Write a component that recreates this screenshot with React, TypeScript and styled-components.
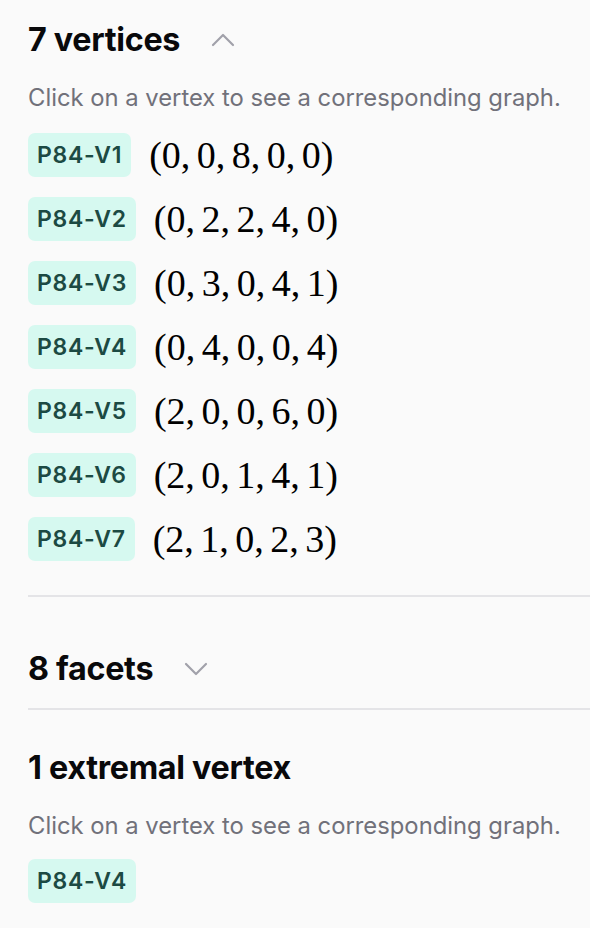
import styled, { createGlobalStyle } from "styled-components";

const GlobalStyle = createGlobalStyle`
  html, body {
    margin: 0;
    padding: 0;
    background: #fafafa;
  }
  body {
    font-family: Inter, "Noto Sans", "Liberation Sans", sans-serif;
    color: #09090b;
  }
`;

const Panel = styled.div`
  width: 590px;
  padding-left: 28px;
  box-sizing: border-box;
`;

const Section = styled.section<{ $top: number; $bottom: number; $last?: boolean }>`
  padding-top: ${(p) => p.$top}px;
  padding-bottom: ${(p) => p.$bottom}px;
  border-bottom: ${(p) => (p.$last ? "none" : "2px solid #e4e4e7")};
`;

const HeaderRow = styled.div`
  display: flex;
  align-items: center;
  height: 40px;
`;

const Title = styled.h2`
  margin: 0;
  font-size: 32.3px;
  font-weight: 700;
  line-height: 40px;
  letter-spacing: -0.3px;
  color: #09090b;
`;

const ToggleButton = styled.button`
  display: flex;
  align-items: center;
  justify-content: center;
  margin-left: 23px;
  padding: 4px 8px;
  border: none;
  background: transparent;
  color: #a1a1aa;
  cursor: pointer;
`;

const Hint = styled.p`
  margin: 24px 0 0;
  font-size: 23.8px;
  line-height: 28px;
  color: #71717a;
`;

const VertexList = styled.ul`
  list-style: none;
  margin: 0;
  padding: 0;
  display: flex;
  flex-direction: column;
  gap: 20px;
`;

const VertexRow = styled.li`
  display: flex;
  align-items: center;
  gap: 18px;
`;

const Badge = styled.button`
  height: 44px;
  padding: 0 9px;
  border: none;
  border-radius: 7px;
  background: #d6f9f0;
  color: #1c4a43;
  font-family: Inter, "Noto Sans", sans-serif;
  font-size: 23px;
  font-weight: 600;
  letter-spacing: 0.7px;
  cursor: pointer;
`;

const MathText = styled.span`
  font-family: "Liberation Serif", "Times New Roman", serif;
  font-size: 38px;
  line-height: 44px;
  word-spacing: -3px;
  color: #000;
`;

const ListWrap = styled.div<{ $top: number }>`
  margin-top: ${(p) => p.$top}px;
`;

function Chevron({ up }: { up: boolean }) {
  return (
    <svg width="24" height="14" viewBox="0 0 24 14" fill="none">
      <path
        d={up ? "M2 12 L12 2 L22 12" : "M2 2 L12 12 L22 2"}
        stroke="currentColor"
        strokeWidth="2.2"
        strokeLinecap="round"
        strokeLinejoin="round"
      />
    </svg>
  );
}

const vertices: [string, string][] = [
  ["P84-V1", "(0, 0, 8, 0, 0)"],
  ["P84-V2", "(0, 2, 2, 4, 0)"],
  ["P84-V3", "(0, 3, 0, 4, 1)"],
  ["P84-V4", "(0, 4, 0, 0, 4)"],
  ["P84-V5", "(2, 0, 0, 6, 0)"],
  ["P84-V6", "(2, 0, 1, 4, 1)"],
  ["P84-V7", "(2, 1, 0, 2, 3)"],
];

export default function App() {
  return (
    <>
      <GlobalStyle />
      <Panel>
        <Section $top={20} $bottom={34}>
          <HeaderRow>
            <Title>7 vertices</Title>
            <ToggleButton aria-label="Collapse">
              <Chevron up />
            </ToggleButton>
          </HeaderRow>
          <Hint>Click on a vertex to see a corresponding graph.</Hint>
          <ListWrap $top={21}>
            <VertexList>
              {vertices.map(([id, coords]) => (
                <VertexRow key={id}>
                  <Badge>{id}</Badge>
                  <MathText>{coords}</MathText>
                </VertexRow>
              ))}
            </VertexList>
          </ListWrap>
        </Section>
        <Section $top={52} $bottom={19}>
          <HeaderRow>
            <Title>8 facets</Title>
            <ToggleButton aria-label="Expand">
              <Chevron up={false} />
            </ToggleButton>
          </HeaderRow>
        </Section>
        <Section $top={38} $bottom={20} $last>
          <HeaderRow>
            <Title>1 extremal vertex</Title>
          </HeaderRow>
          <Hint>Click on a vertex to see a corresponding graph.</Hint>
          <ListWrap $top={19}>
            <Badge>P84-V4</Badge>
          </ListWrap>
        </Section>
      </Panel>
    </>
  );
}
